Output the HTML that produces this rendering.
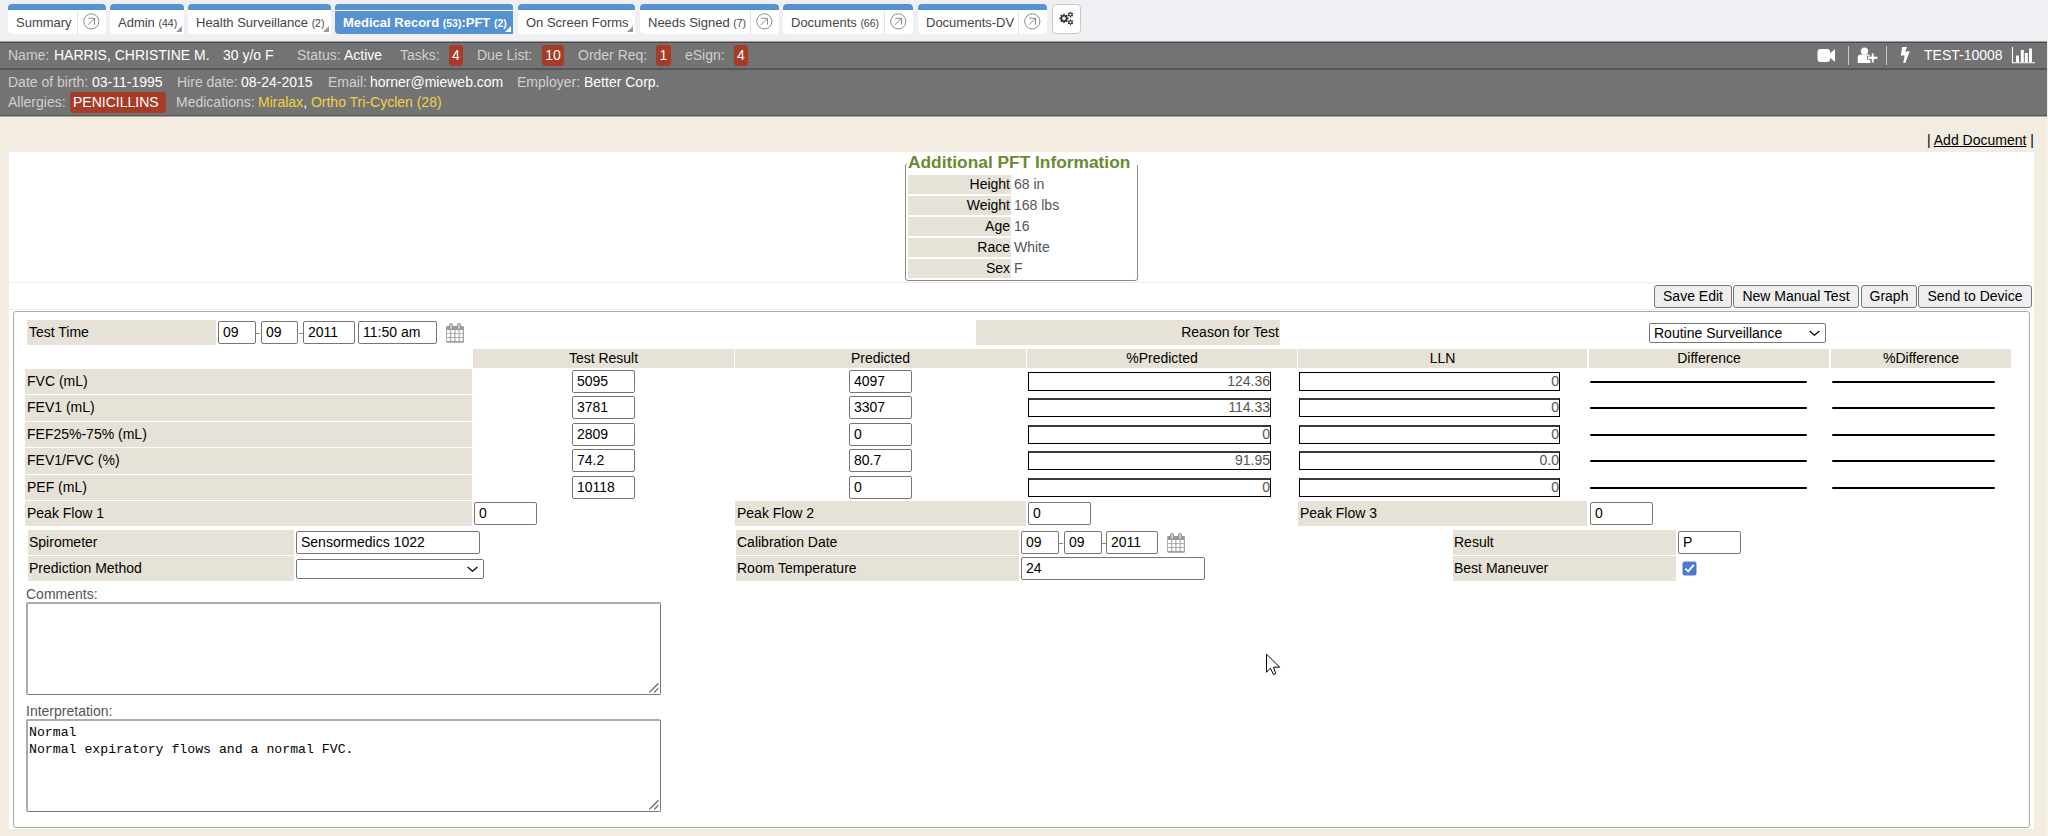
<!DOCTYPE html><html><head><meta charset="utf-8"><title>PFT</title><style>
*{box-sizing:border-box}
html,body{margin:0;padding:0}
body{width:2048px;height:836px;overflow:hidden;position:relative;background:#f3ece0;font-family:"Liberation Sans",sans-serif;font-size:14px;color:#000}
.abs{position:absolute}
.tab{position:absolute;top:4px;height:30px;background:#fff;border-radius:4px;font-size:13px;color:#444;white-space:nowrap;overflow:hidden}
.tab:before{content:"";position:absolute;left:0;right:0;top:0;height:6px;background:#5692d1}
.tab .t{position:absolute;top:11px;line-height:15px}
.tab small{font-size:10.5px}
.tab .sep{position:absolute;top:7px;bottom:0;width:1px;background:#e3e3e3}
.tab .ico{position:absolute;top:9px;line-height:0}
.tab .tri{position:absolute;right:2px;bottom:2px;width:0;height:0;border-left:6px solid transparent;border-bottom:6px solid #999}
.tab.active{background:#5692d1;color:#fff;font-weight:bold}
.tab.active:after{content:"";position:absolute;left:0;right:0;top:6px;height:1px;background:#fff}
.tab.active .tri{border-bottom-color:#fff}
.txt{position:absolute;white-space:nowrap;line-height:16px}
.lbl{color:#d2d2d2}
.badge{position:absolute;background:#a63b27;color:#fff;border-radius:3px;text-align:center;line-height:20px}
.lb{position:absolute;background:#e6e2d7;white-space:nowrap;font-size:14px;color:#000;line-height:16px}
.lb span{position:absolute;top:50%;margin-top:-8px}
.inp{position:absolute;background:#fff;border:1px solid #767676;border-radius:2px;font-size:14px;color:#000;white-space:nowrap;overflow:hidden;line-height:15px}
.inp span{position:absolute;left:4px;top:50%;margin-top:-7.5px}
.inp2{position:absolute;background:#fff;border:1px solid #000;font-size:14px;color:#555;white-space:nowrap;line-height:15px}
.inp2 span{position:absolute;right:0px;top:50%;margin-top:-7.5px}
.inp2.tb span{margin-top:-8.5px}
.dline{position:absolute;height:2px;background:#000;border-radius:1px}
.btn{position:absolute;top:285px;height:23px;background:#efefef;border:1px solid #767676;border-radius:3px;font-size:14px;text-align:center;line-height:20px;white-space:nowrap}
</style></head><body>
<div class="abs" style="left:0;top:0;width:2048px;height:41px;background:#efeff4"></div>
<div class="tab" style="left:8px;width:98px;"><span class="t" style="left:8px">Summary</span><div class="sep" style="left:69px"></div><div class="ico" style="left:74px"><svg width="18" height="18" viewBox="0 0 18 18"><circle cx="9.3" cy="8.4" r="7.6" fill="none" stroke="#8c8c8c" stroke-width="1"/><path d="M6 11.8 L12.4 5.4 M6.2 5.3 H12.5 V11.6" fill="none" stroke="#8c8c8c" stroke-width="1"/></svg></div></div>
<div class="tab" style="left:110px;width:74px;border-bottom-right-radius:0;"><span class="t" style="left:8px">Admin <small>(44)</small></span><div class="tri"></div></div>
<div class="tab" style="left:188px;width:143px;border-bottom-right-radius:0;"><span class="t" style="left:8px">Health Surveillance <small>(2)</small></span><div class="tri"></div></div>
<div class="tab active" style="left:335px;width:178px;border-bottom-right-radius:0;"><span class="t" style="left:8px">Medical Record <small>(53)</small>:PFT <small>(2)</small></span><div class="tri"></div></div>
<div class="tab" style="left:518px;width:117px;border-bottom-right-radius:0;"><span class="t" style="left:8px">On Screen Forms</span><div class="tri"></div></div>
<div class="tab" style="left:640px;width:139px;"><span class="t" style="left:8px">Needs Signed <small>(7)</small></span><div class="sep" style="left:110px"></div><div class="ico" style="left:115px"><svg width="18" height="18" viewBox="0 0 18 18"><circle cx="9.3" cy="8.4" r="7.6" fill="none" stroke="#8c8c8c" stroke-width="1"/><path d="M6 11.8 L12.4 5.4 M6.2 5.3 H12.5 V11.6" fill="none" stroke="#8c8c8c" stroke-width="1"/></svg></div></div>
<div class="tab" style="left:783px;width:130px;"><span class="t" style="left:8px">Documents <small>(66)</small></span><div class="sep" style="left:101px"></div><div class="ico" style="left:106px"><svg width="18" height="18" viewBox="0 0 18 18"><circle cx="9.3" cy="8.4" r="7.6" fill="none" stroke="#8c8c8c" stroke-width="1"/><path d="M6 11.8 L12.4 5.4 M6.2 5.3 H12.5 V11.6" fill="none" stroke="#8c8c8c" stroke-width="1"/></svg></div></div>
<div class="tab" style="left:918px;width:129px;"><span class="t" style="left:8px">Documents-DV</span><div class="sep" style="left:100px"></div><div class="ico" style="left:105px"><svg width="18" height="18" viewBox="0 0 18 18"><circle cx="9.3" cy="8.4" r="7.6" fill="none" stroke="#8c8c8c" stroke-width="1"/><path d="M6 11.8 L12.4 5.4 M6.2 5.3 H12.5 V11.6" fill="none" stroke="#8c8c8c" stroke-width="1"/></svg></div></div>
<div class="abs" style="left:1052px;top:4px;width:29px;height:30px;background:#fff;border:1px solid #c9c9c9;border-radius:4px"></div>
<svg class="abs" style="left:1052px;top:4px" width="29" height="30" viewBox="1052 4 29 30"><circle cx="1064" cy="18.4" r="2.65" fill="none" stroke="#333" stroke-width="1.7"/><rect x="1063.2" y="13.799999999999999" width="1.6" height="1.6999999999999997" fill="#333" transform="rotate(0.0 1064 18.4)"/><rect x="1063.2" y="13.799999999999999" width="1.6" height="1.6999999999999997" fill="#333" transform="rotate(45.0 1064 18.4)"/><rect x="1063.2" y="13.799999999999999" width="1.6" height="1.6999999999999997" fill="#333" transform="rotate(90.0 1064 18.4)"/><rect x="1063.2" y="13.799999999999999" width="1.6" height="1.6999999999999997" fill="#333" transform="rotate(135.0 1064 18.4)"/><rect x="1063.2" y="13.799999999999999" width="1.6" height="1.6999999999999997" fill="#333" transform="rotate(180.0 1064 18.4)"/><rect x="1063.2" y="13.799999999999999" width="1.6" height="1.6999999999999997" fill="#333" transform="rotate(225.0 1064 18.4)"/><rect x="1063.2" y="13.799999999999999" width="1.6" height="1.6999999999999997" fill="#333" transform="rotate(270.0 1064 18.4)"/><rect x="1063.2" y="13.799999999999999" width="1.6" height="1.6999999999999997" fill="#333" transform="rotate(315.0 1064 18.4)"/><circle cx="1070.5" cy="14.6" r="1.55" fill="none" stroke="#333" stroke-width="1.1"/><rect x="1069.95" y="11.7" width="1.1" height="1.4" fill="#333" transform="rotate(0.0 1070.5 14.6)"/><rect x="1069.95" y="11.7" width="1.1" height="1.4" fill="#333" transform="rotate(60.0 1070.5 14.6)"/><rect x="1069.95" y="11.7" width="1.1" height="1.4" fill="#333" transform="rotate(120.0 1070.5 14.6)"/><rect x="1069.95" y="11.7" width="1.1" height="1.4" fill="#333" transform="rotate(180.0 1070.5 14.6)"/><rect x="1069.95" y="11.7" width="1.1" height="1.4" fill="#333" transform="rotate(240.0 1070.5 14.6)"/><rect x="1069.95" y="11.7" width="1.1" height="1.4" fill="#333" transform="rotate(300.0 1070.5 14.6)"/><circle cx="1070.5" cy="22.3" r="1.55" fill="none" stroke="#333" stroke-width="1.1"/><rect x="1069.95" y="19.400000000000002" width="1.1" height="1.4" fill="#333" transform="rotate(0.0 1070.5 22.3)"/><rect x="1069.95" y="19.400000000000002" width="1.1" height="1.4" fill="#333" transform="rotate(60.0 1070.5 22.3)"/><rect x="1069.95" y="19.400000000000002" width="1.1" height="1.4" fill="#333" transform="rotate(120.0 1070.5 22.3)"/><rect x="1069.95" y="19.400000000000002" width="1.1" height="1.4" fill="#333" transform="rotate(180.0 1070.5 22.3)"/><rect x="1069.95" y="19.400000000000002" width="1.1" height="1.4" fill="#333" transform="rotate(240.0 1070.5 22.3)"/><rect x="1069.95" y="19.400000000000002" width="1.1" height="1.4" fill="#333" transform="rotate(300.0 1070.5 22.3)"/></svg>
<div class="abs" style="left:0;top:41px;width:2047px;height:75px;background:#737373"></div>
<div class="abs" style="left:2047px;top:41px;width:1px;height:75px;background:#e9e9e9"></div>
<div class="abs" style="left:0;top:41px;width:2047px;height:1px;background:#9d9d9f"></div>
<div class="abs" style="left:0;top:42px;width:2047px;height:1px;background:#4a4a4a"></div>
<div class="abs" style="left:0;top:68px;width:2047px;height:2px;background:#555"></div>
<div class="abs" style="left:0;top:115px;width:2047px;height:1px;background:#575757"></div>
<div class="abs" style="left:0;top:116px;width:2047px;height:1px;background:#a8a59d"></div>
<div class="txt" style="left:8px;top:47px;color:#d0d0d0">Name:</div>
<div class="txt" style="left:54px;top:47px;color:#fff">HARRIS, CHRISTINE M.</div>
<div class="txt" style="left:223px;top:47px;color:#fff">30 y/o F</div>
<div class="txt" style="left:297px;top:47px;color:#d0d0d0">Status:</div>
<div class="txt" style="left:344px;top:47px;color:#fff">Active</div>
<div class="txt" style="left:400px;top:47px;color:#d0d0d0">Tasks:</div>
<div class="txt" style="left:477px;top:47px;color:#d0d0d0">Due List:</div>
<div class="txt" style="left:578px;top:47px;color:#d0d0d0">Order Req:</div>
<div class="txt" style="left:685px;top:47px;color:#d0d0d0">eSign:</div>
<div class="badge" style="left:449px;top:45px;width:14px;height:21px;line-height:21px">4</div>
<div class="badge" style="left:542px;top:45px;width:22px;height:21px;line-height:21px">10</div>
<div class="badge" style="left:656px;top:45px;width:15px;height:21px;line-height:21px">1</div>
<div class="badge" style="left:734px;top:45px;width:14px;height:21px;line-height:21px">4</div>
<div class="txt" style="left:8px;top:74px;color:#d0d0d0">Date of birth:</div>
<div class="txt" style="left:92px;top:74px;color:#fff">03-11-1995</div>
<div class="txt" style="left:177px;top:74px;color:#d0d0d0">Hire date:</div>
<div class="txt" style="left:241px;top:74px;color:#fff">08-24-2015</div>
<div class="txt" style="left:328px;top:74px;color:#d0d0d0">Email:</div>
<div class="txt" style="left:370px;top:74px;color:#fff">horner@mieweb.com</div>
<div class="txt" style="left:517px;top:74px;color:#d0d0d0">Employer:</div>
<div class="txt" style="left:584px;top:74px;color:#fff">Better Corp.</div>
<div class="txt" style="left:8px;top:94px;color:#d0d0d0">Allergies:</div>
<div class="badge" style="left:70px;top:92px;width:96px;height:21px;line-height:21px;text-align:left;padding-left:3px">PENICILLINS</div>
<div class="txt" style="left:176px;top:94px;color:#d0d0d0">Medications:</div>
<div class="txt" style="left:258px;top:94px;color:#f0d340">Miralax<span style="color:#fff">,</span> Ortho Tri-Cyclen (28)</div>
<svg class="abs" style="left:1815px;top:45px" width="225" height="22" viewBox="1815 45 225 22"><rect x="1817.5" y="49" width="12.5" height="13" rx="3" fill="#fff"/><path d="M1829.5 53.5 L1835 49.2 V61.8 L1829.5 57.5 Z" fill="#fff"/><rect x="1848" y="46" width="1" height="19" fill="#c8c8c8"/><circle cx="1864.5" cy="51.2" r="3.6" fill="#fff"/><path d="M1857.7 62.9 V57.5 Q1857.7 54.5 1860.7 54.5 H1868.5 Q1870 54.5 1870.4 55.5 V62.9 Z" fill="#fff"/><path d="M1867.5 56.2 H1871.3 V52.9 H1874.1 V56.2 H1877.9 V59.3 H1874.1 V62.9 H1871.3 V59.3 H1867.5 Z" fill="#fff" stroke="#737373" stroke-width="0.9"/><rect x="1886" y="46" width="1" height="19" fill="#c8c8c8"/><path d="M1902.1 46.9 H1907 L1905.2 51.5 L1909.8 51.3 L1905.3 63 H1903.3 L1904.6 55.6 H1900.8 Z" fill="#fff"/><path d="M2012.5 47 V62.8 H2035" fill="none" stroke="#fff" stroke-width="1.1"/><rect x="2016" y="55.5" width="3" height="6.5" fill="#fff"/><rect x="2020.8" y="50" width="3" height="12" fill="#fff"/><rect x="2024.8" y="53" width="3" height="9" fill="#fff"/><rect x="2029" y="48.5" width="3" height="13.5" fill="#fff"/></svg>
<div class="txt" style="left:1924px;top:47px;color:#fff">TEST-10008</div>
<div class="abs" style="left:2047px;top:117px;width:1px;height:719px;background:#f6f1e9"></div>
<div class="txt" style="left:1927px;top:132px;color:#000">| <span style="text-decoration:underline">Add Document</span> |</div>
<div class="abs" style="left:9px;top:152px;width:2025px;height:677px;background:#fff"></div>
<div class="abs" style="left:9px;top:282px;width:2024px;height:1px;background:#f3ece0"></div>
<div class="abs" style="left:9px;top:309px;width:2024px;height:1px;background:#f3ece0"></div>
<div class="abs" style="left:905px;top:163px;width:233px;height:118px;border:1px solid #8c8c8c;border-radius:3px"></div>
<div class="abs" style="left:907px;top:152px;width:231px;height:13px;background:#fff"></div>
<div class="txt" style="left:908px;top:155px;font-size:16px;font-weight:bold;transform:scaleX(1.083);transform-origin:0 0;color:#6b8a2f">Additional PFT Information</div>
<div class="abs" style="left:908px;top:175px;width:103px;height:19px;background:#e6e2d7"></div>
<div class="txt" style="right:1038px;top:176px;">Height</div>
<div class="txt" style="left:1014px;top:176px;color:#555">68 in</div>
<div class="abs" style="left:908px;top:196px;width:103px;height:19px;background:#e6e2d7"></div>
<div class="txt" style="right:1038px;top:197px;">Weight</div>
<div class="txt" style="left:1014px;top:197px;color:#555">168 lbs</div>
<div class="abs" style="left:908px;top:217px;width:103px;height:19px;background:#e6e2d7"></div>
<div class="txt" style="right:1038px;top:218px;">Age</div>
<div class="txt" style="left:1014px;top:218px;color:#555">16</div>
<div class="abs" style="left:908px;top:238px;width:103px;height:19px;background:#e6e2d7"></div>
<div class="txt" style="right:1038px;top:239px;">Race</div>
<div class="txt" style="left:1014px;top:239px;color:#555">White</div>
<div class="abs" style="left:908px;top:259px;width:103px;height:19px;background:#e6e2d7"></div>
<div class="txt" style="right:1038px;top:260px;">Sex</div>
<div class="txt" style="left:1014px;top:260px;color:#555">F</div>
<div class="btn" style="left:1654px;width:78px">Save Edit</div>
<div class="btn" style="left:1733px;width:126px">New Manual Test</div>
<div class="btn" style="left:1861px;width:56px">Graph</div>
<div class="btn" style="left:1918px;width:114px">Send to Device</div>
<div class="abs" style="left:13px;top:311px;width:2017px;height:517px;border:1px solid #a9a9a9;border-radius:3px"></div>
<div class="abs" style="left:27px;top:320px;width:189px;height:25px;background:#e6e2d7"></div>
<div class="txt" style="left:29px;top:324px;">Test Time</div>
<div class="inp" style="left:218px;top:321px;width:38px;height:23px;"><span>09</span></div>
<div class="abs" style="left:256px;top:333px;width:4px;height:1px;background:#888"></div>
<div class="inp" style="left:261px;top:321px;width:37px;height:23px;"><span>09</span></div>
<div class="abs" style="left:299px;top:333px;width:4px;height:1px;background:#888"></div>
<div class="inp" style="left:303px;top:321px;width:52px;height:23px;"><span>2011</span></div>
<div class="inp" style="left:358px;top:321px;width:79px;height:23px;"><span>11:50 am</span></div>
<svg class="abs" style="left:446px;top:322px" width="19" height="22" viewBox="0 0 19 22"><rect x="0.2" y="3.9" width="17.7" height="16.9" rx="1.2" fill="#999"/><rect x="3" y="1" width="4" height="6.5" rx="2" fill="#999"/><rect x="11" y="1" width="4" height="6.5" rx="2" fill="#999"/><rect x="4.5" y="2.2" width="1.1" height="4.5" fill="#f4f4f4"/><rect x="12.5" y="2.2" width="1.1" height="4.5" fill="#f4f4f4"/><rect x="1.0" y="8.0" width="3.2" height="3.2" fill="#fff"/><rect x="5.2" y="8.0" width="3.2" height="3.2" fill="#fff"/><rect x="9.4" y="8.0" width="3.2" height="3.2" fill="#fff"/><rect x="13.6" y="8.0" width="3.2" height="3.2" fill="#fff"/><rect x="1.0" y="11.9" width="3.2" height="3.2" fill="#fff"/><rect x="5.2" y="11.9" width="3.2" height="3.2" fill="#fff"/><rect x="9.4" y="11.9" width="3.2" height="3.2" fill="#fff"/><rect x="13.6" y="11.9" width="3.2" height="3.2" fill="#fff"/><rect x="1.0" y="15.9" width="3.2" height="3.2" fill="#fff"/><rect x="5.2" y="15.9" width="3.2" height="3.2" fill="#fff"/><rect x="9.4" y="15.9" width="3.2" height="3.2" fill="#fff"/><rect x="13.6" y="15.9" width="3.2" height="3.2" fill="#fff"/></svg>
<div class="abs" style="left:976px;top:320px;width:304px;height:25px;background:#e6e2d7"></div>
<div class="txt" style="right:769px;top:324px;">Reason for Test</div>
<div class="inp" style="left:1649px;top:323px;width:177px;height:20px;border-radius:2px"><span style="left:4px">Routine Surveillance</span><svg style="position:absolute;right:5px;top:6px" width="11" height="7" viewBox="0 0 11 7"><path d="M0.6 1 L5.5 5.3 L10.4 1" fill="none" stroke="#000" stroke-width="1.2"/></svg></div>
<div class="abs" style="left:473px;top:349px;width:261px;height:19px;background:#e6e2d7;text-align:center;line-height:16px;padding-top:1px">Test Result</div>
<div class="abs" style="left:735px;top:349px;width:291px;height:19px;background:#e6e2d7;text-align:center;line-height:16px;padding-top:1px">Predicted</div>
<div class="abs" style="left:1027px;top:349px;width:270px;height:19px;background:#e6e2d7;text-align:center;line-height:16px;padding-top:1px">%Predicted</div>
<div class="abs" style="left:1298px;top:349px;width:289px;height:19px;background:#e6e2d7;text-align:center;line-height:16px;padding-top:1px">LLN</div>
<div class="abs" style="left:1589px;top:349px;width:240px;height:19px;background:#e6e2d7;text-align:center;line-height:16px;padding-top:1px">Difference</div>
<div class="abs" style="left:1831px;top:349px;width:180px;height:19px;background:#e6e2d7;text-align:center;line-height:16px;padding-top:1px">%Difference</div>
<div class="abs" style="left:25px;top:369px;width:447px;height:25px;background:#e6e2d7"></div>
<div class="txt" style="left:27px;top:373px;">FVC (mL)</div>
<div class="inp" style="left:572px;top:370px;width:63px;height:23px;"><span>5095</span></div>
<div class="inp" style="left:849px;top:370px;width:63px;height:23px;"><span>4097</span></div>
<div class="inp2" style="left:1028px;top:372px;width:243px;height:19px;"><span>124.36</span></div>
<div class="inp2" style="left:1299px;top:372px;width:261px;height:19px;"><span>0</span></div>
<div class="dline" style="left:1590px;top:381px;width:217px"></div>
<div class="dline" style="left:1832px;top:381px;width:163px"></div>
<div class="abs" style="left:25px;top:395px;width:447px;height:26px;background:#e6e2d7"></div>
<div class="txt" style="left:27px;top:399px;">FEV1 (mL)</div>
<div class="inp" style="left:572px;top:396px;width:63px;height:23px;"><span>3781</span></div>
<div class="inp" style="left:849px;top:396px;width:63px;height:23px;"><span>3307</span></div>
<div class="inp2 tb" style="left:1028px;top:398px;width:243px;height:19px;border-top:2px solid #3a3a3a"><span>114.33</span></div>
<div class="inp2 tb" style="left:1299px;top:398px;width:261px;height:19px;border-top:2px solid #3a3a3a"><span>0</span></div>
<div class="dline" style="left:1590px;top:407px;width:217px"></div>
<div class="dline" style="left:1832px;top:407px;width:163px"></div>
<div class="abs" style="left:25px;top:422px;width:447px;height:25px;background:#e6e2d7"></div>
<div class="txt" style="left:27px;top:426px;">FEF25%-75% (mL)</div>
<div class="inp" style="left:572px;top:423px;width:63px;height:23px;"><span>2809</span></div>
<div class="inp" style="left:849px;top:423px;width:63px;height:23px;"><span>0</span></div>
<div class="inp2 tb" style="left:1028px;top:425px;width:243px;height:19px;border-top:2px solid #3a3a3a"><span>0</span></div>
<div class="inp2 tb" style="left:1299px;top:425px;width:261px;height:19px;border-top:2px solid #3a3a3a"><span>0</span></div>
<div class="dline" style="left:1590px;top:434px;width:217px"></div>
<div class="dline" style="left:1832px;top:434px;width:163px"></div>
<div class="abs" style="left:25px;top:448px;width:447px;height:26px;background:#e6e2d7"></div>
<div class="txt" style="left:27px;top:452px;">FEV1/FVC (%)</div>
<div class="inp" style="left:572px;top:449px;width:63px;height:23px;"><span>74.2</span></div>
<div class="inp" style="left:849px;top:449px;width:63px;height:23px;"><span>80.7</span></div>
<div class="inp2 tb" style="left:1028px;top:451px;width:243px;height:19px;border-top:2px solid #3a3a3a"><span>91.95</span></div>
<div class="inp2 tb" style="left:1299px;top:451px;width:261px;height:19px;border-top:2px solid #3a3a3a"><span>0.0</span></div>
<div class="dline" style="left:1590px;top:460px;width:217px"></div>
<div class="dline" style="left:1832px;top:460px;width:163px"></div>
<div class="abs" style="left:25px;top:475px;width:447px;height:25px;background:#e6e2d7"></div>
<div class="txt" style="left:27px;top:479px;">PEF (mL)</div>
<div class="inp" style="left:572px;top:476px;width:63px;height:23px;"><span>10118</span></div>
<div class="inp" style="left:849px;top:476px;width:63px;height:23px;"><span>0</span></div>
<div class="inp2 tb" style="left:1028px;top:478px;width:243px;height:19px;border-top:2px solid #3a3a3a"><span>0</span></div>
<div class="inp2 tb" style="left:1299px;top:478px;width:261px;height:19px;border-top:2px solid #3a3a3a"><span>0</span></div>
<div class="dline" style="left:1590px;top:487px;width:217px"></div>
<div class="dline" style="left:1832px;top:487px;width:163px"></div>
<div class="abs" style="left:25px;top:501px;width:447px;height:25px;background:#e6e2d7"></div>
<div class="txt" style="left:27px;top:505px;">Peak Flow 1</div>
<div class="inp" style="left:474px;top:502px;width:63px;height:23px;"><span>0</span></div>
<div class="abs" style="left:735px;top:501px;width:291px;height:25px;background:#e6e2d7"></div>
<div class="txt" style="left:737px;top:505px;">Peak Flow 2</div>
<div class="inp" style="left:1028px;top:502px;width:63px;height:23px;"><span>0</span></div>
<div class="abs" style="left:1298px;top:501px;width:289px;height:25px;background:#e6e2d7"></div>
<div class="txt" style="left:1300px;top:505px;">Peak Flow 3</div>
<div class="inp" style="left:1590px;top:502px;width:63px;height:23px;"><span>0</span></div>
<div class="abs" style="left:28px;top:530px;width:266px;height:25px;background:#e6e2d7"></div>
<div class="txt" style="left:29px;top:534px;">Spirometer</div>
<div class="inp" style="left:296px;top:531px;width:184px;height:23px;"><span>Sensormedics 1022</span></div>
<div class="abs" style="left:28px;top:556px;width:266px;height:25px;background:#e6e2d7"></div>
<div class="txt" style="left:29px;top:560px;">Prediction Method</div>
<div class="inp" style="left:296px;top:559px;width:188px;height:20px;border-radius:2px"><svg style="position:absolute;right:5px;top:6px" width="11" height="7" viewBox="0 0 11 7"><path d="M0.6 1 L5.5 5.3 L10.4 1" fill="none" stroke="#000" stroke-width="1.2"/></svg></div>
<div class="abs" style="left:736px;top:530px;width:283px;height:25px;background:#e6e2d7"></div>
<div class="txt" style="left:737px;top:534px;">Calibration Date</div>
<div class="inp" style="left:1021px;top:531px;width:38px;height:23px;"><span>09</span></div>
<div class="abs" style="left:1059px;top:543px;width:4px;height:1px;background:#888"></div>
<div class="inp" style="left:1064px;top:531px;width:38px;height:23px;"><span>09</span></div>
<div class="abs" style="left:1102px;top:543px;width:4px;height:1px;background:#888"></div>
<div class="inp" style="left:1106px;top:531px;width:52px;height:23px;"><span>2011</span></div>
<svg class="abs" style="left:1167px;top:532px" width="19" height="22" viewBox="0 0 19 22"><rect x="0.2" y="3.9" width="17.7" height="16.9" rx="1.2" fill="#999"/><rect x="3" y="1" width="4" height="6.5" rx="2" fill="#999"/><rect x="11" y="1" width="4" height="6.5" rx="2" fill="#999"/><rect x="4.5" y="2.2" width="1.1" height="4.5" fill="#f4f4f4"/><rect x="12.5" y="2.2" width="1.1" height="4.5" fill="#f4f4f4"/><rect x="1.0" y="8.0" width="3.2" height="3.2" fill="#fff"/><rect x="5.2" y="8.0" width="3.2" height="3.2" fill="#fff"/><rect x="9.4" y="8.0" width="3.2" height="3.2" fill="#fff"/><rect x="13.6" y="8.0" width="3.2" height="3.2" fill="#fff"/><rect x="1.0" y="11.9" width="3.2" height="3.2" fill="#fff"/><rect x="5.2" y="11.9" width="3.2" height="3.2" fill="#fff"/><rect x="9.4" y="11.9" width="3.2" height="3.2" fill="#fff"/><rect x="13.6" y="11.9" width="3.2" height="3.2" fill="#fff"/><rect x="1.0" y="15.9" width="3.2" height="3.2" fill="#fff"/><rect x="5.2" y="15.9" width="3.2" height="3.2" fill="#fff"/><rect x="9.4" y="15.9" width="3.2" height="3.2" fill="#fff"/><rect x="13.6" y="15.9" width="3.2" height="3.2" fill="#fff"/></svg>
<div class="abs" style="left:736px;top:556px;width:283px;height:25px;background:#e6e2d7"></div>
<div class="txt" style="left:737px;top:560px;">Room Temperature</div>
<div class="inp" style="left:1021px;top:557px;width:184px;height:23px;"><span>24</span></div>
<div class="abs" style="left:1453px;top:530px;width:223px;height:25px;background:#e6e2d7"></div>
<div class="txt" style="left:1454px;top:534px;">Result</div>
<div class="inp" style="left:1678px;top:531px;width:63px;height:23px;"><span>P</span></div>
<div class="abs" style="left:1453px;top:556px;width:223px;height:25px;background:#e6e2d7"></div>
<div class="txt" style="left:1454px;top:560px;">Best Maneuver</div>
<svg class="abs" style="left:1682px;top:561px" width="15" height="15" viewBox="0 0 15 15"><rect x="0.5" y="0.5" width="14" height="14" rx="2.5" fill="#4a7bd0"/><path d="M3.3 7.6 L6.2 10.4 L11.8 3.9" fill="none" stroke="#fff" stroke-width="2"/></svg>
<div class="txt" style="left:26px;top:586px;font-size:14px;color:#555">Comments:</div>
<div class="abs" style="left:26px;top:602px;width:635px;height:93px;border-style:solid;border-color:#acacac #777 #777 #acacac;border-width:2px 1px 1px 2px;border-radius:2px;background:#fff"></div>
<div class="txt" style="left:26px;top:703px;font-size:14px;color:#555">Interpretation:</div>
<div class="abs" style="left:26px;top:719px;width:635px;height:93px;border-style:solid;border-color:#acacac #777 #777 #acacac;border-width:2px 1px 1px 2px;border-radius:2px;background:#fff"></div>
<div class="txt" style="left:29px;top:724px;font-family:'Liberation Mono',monospace;font-size:13.2px;line-height:17px">Normal<br>Normal expiratory flows and a normal FVC.</div>
<svg class="abs" style="left:646px;top:680px" width="14" height="14" viewBox="0 0 14 14"><path d="M3.6 12.1 L12 3.7 M8.5 12.1 L12 8.6" stroke="#666" stroke-width="1.3" stroke-linecap="round"/></svg>
<svg class="abs" style="left:646px;top:797px" width="14" height="14" viewBox="0 0 14 14"><path d="M3.6 12.1 L12 3.7 M8.5 12.1 L12 8.6" stroke="#666" stroke-width="1.3" stroke-linecap="round"/></svg>
<svg class="abs" style="left:1265px;top:653px" width="18" height="24" viewBox="0 0 18 24"><path d="M1.5 1.1 V19.3 L5.4 15.2 L8.4 21.4 L10.8 20.6 L8.4 14.2 H14.6 Z" fill="#fff" stroke="#000" stroke-width="1" stroke-linejoin="miter"/></svg>
</body></html>
